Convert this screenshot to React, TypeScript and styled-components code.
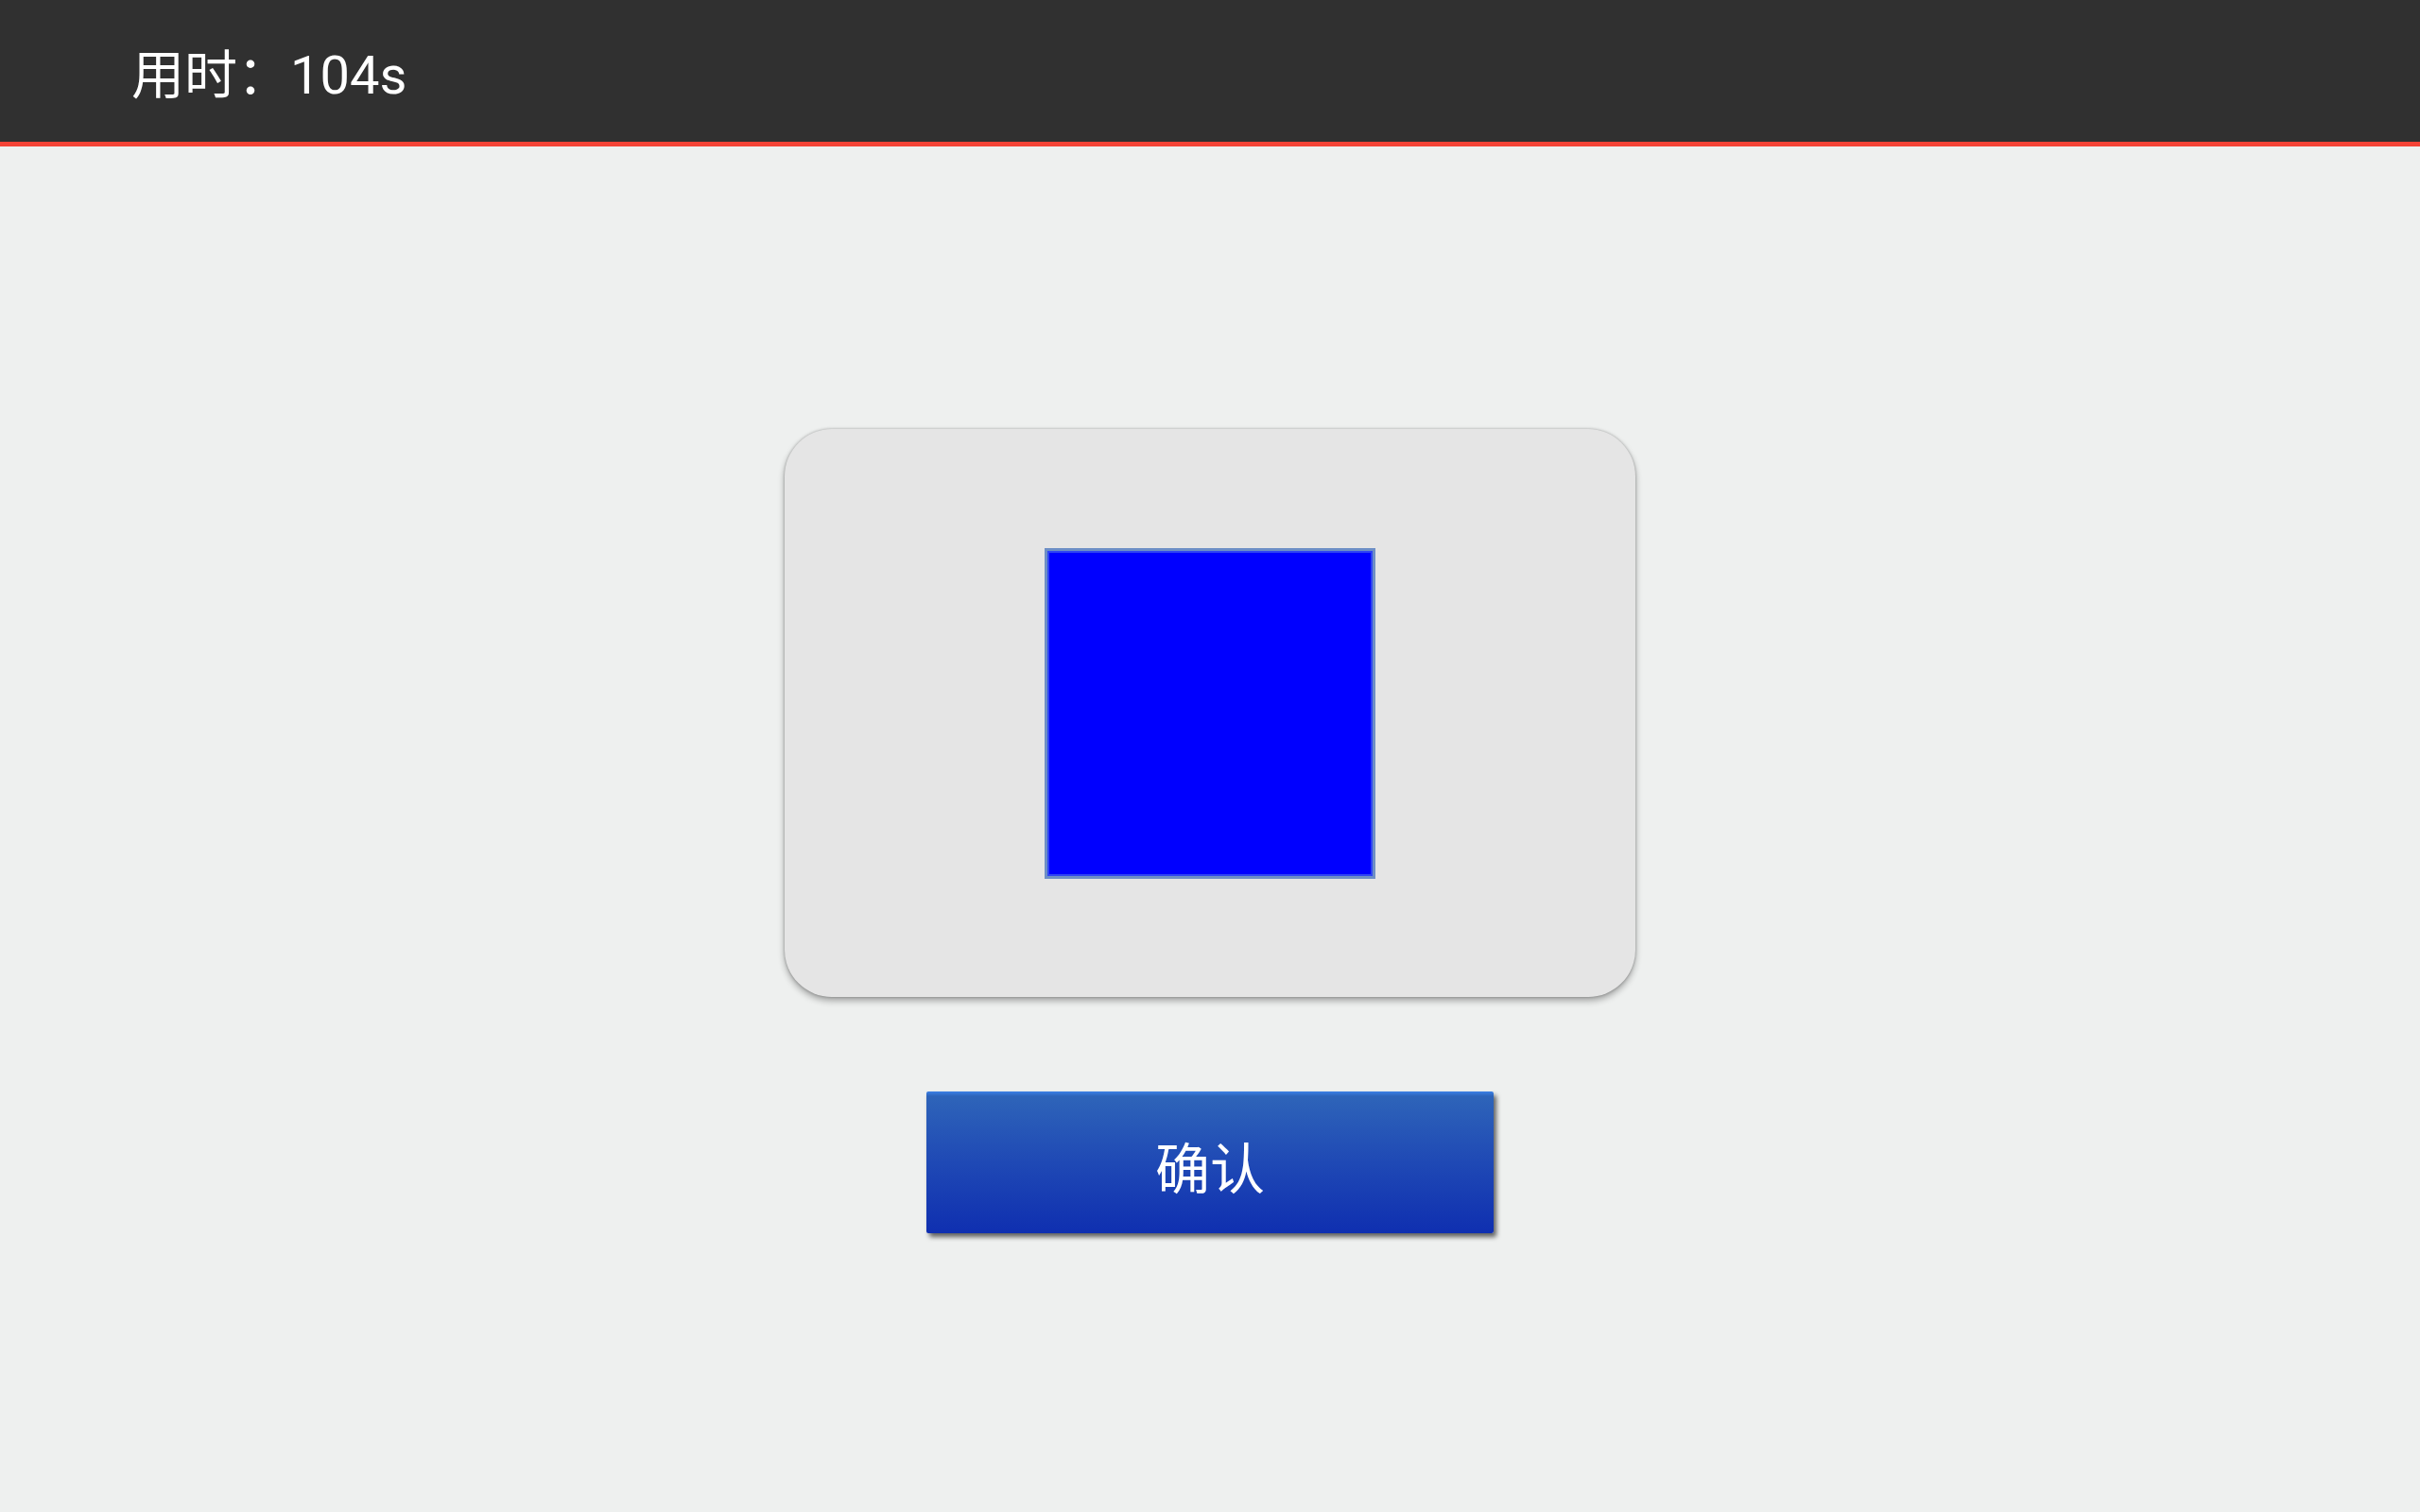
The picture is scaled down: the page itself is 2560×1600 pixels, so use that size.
import React from "react";
import styled, { createGlobalStyle } from "styled-components";

const GlobalStyle = createGlobalStyle`
  html, body {
    margin: 0;
    padding: 0;
    height: 100%;
    background: #eef0ef;
  }
  #root {
    min-height: 100vh;
  }
  * { box-sizing: border-box; }
`;

const Page = styled.div`
  min-height: 100vh;
  display: flex;
  flex-direction: column;
  background: #eef0ef;
  font-family: Roboto, "Noto Sans CJK SC", sans-serif;
`;

const TopBar = styled.header`
  height: 155px;
  flex: none;
  display: flex;
  align-items: center;
  padding: 9px 0 0 139px;
  background: #303030;
  border-bottom: 5px solid #f44336;
`;

const Timer = styled.span`
  color: #ffffff;
  font-size: 56px;
  line-height: 1;
  font-family: Roboto, "Noto Sans CJK SC", sans-serif;
`;

const Main = styled.main`
  flex: 1;
  display: flex;
  flex-direction: column;
  align-items: center;
  padding-top: 299px;
  gap: 100px;
`;

const Card = styled.div`
  width: 900px;
  height: 601px;
  border-radius: 50px;
  background: #e5e5e5;
  box-shadow: 0 4px 7px rgba(0, 0, 0, 0.32), 0 0 3px rgba(0, 0, 0, 0.28);
  display: flex;
  align-items: center;
  justify-content: center;
`;

const ColorSwatch = styled.div<{ $color: string }>`
  width: 350px;
  height: 350px;
  background: ${(p) => p.$color};
  border: 3px solid #6d8fc6;
  box-shadow: inset 0 0 0 2px #2f45f2;
`;

const ConfirmButton = styled.button`
  width: 600px;
  height: 150px;
  border: none;
  border-radius: 2px;
  padding: 6px 0 0;
  background: linear-gradient(to bottom, #3b80e6 0px, #2e64b9 5px, #1f49b5 50%, #0f2fb0 100%);
  box-shadow: 3px 4px 5px rgba(0, 0, 0, 0.6);
  color: #ffffff;
  font-family: "Noto Sans CJK SC", sans-serif;
  font-size: 58px;
  line-height: 1;
  cursor: pointer;
`;

export default function App() {
  return (
    <>
      <GlobalStyle />
      <Page>
        <TopBar>
          <Timer>用时：104s</Timer>
        </TopBar>
        <Main>
          <Card>
            <ColorSwatch $color="#0000ff" />
          </Card>
          <ConfirmButton>确认</ConfirmButton>
        </Main>
      </Page>
    </>
  );
}
